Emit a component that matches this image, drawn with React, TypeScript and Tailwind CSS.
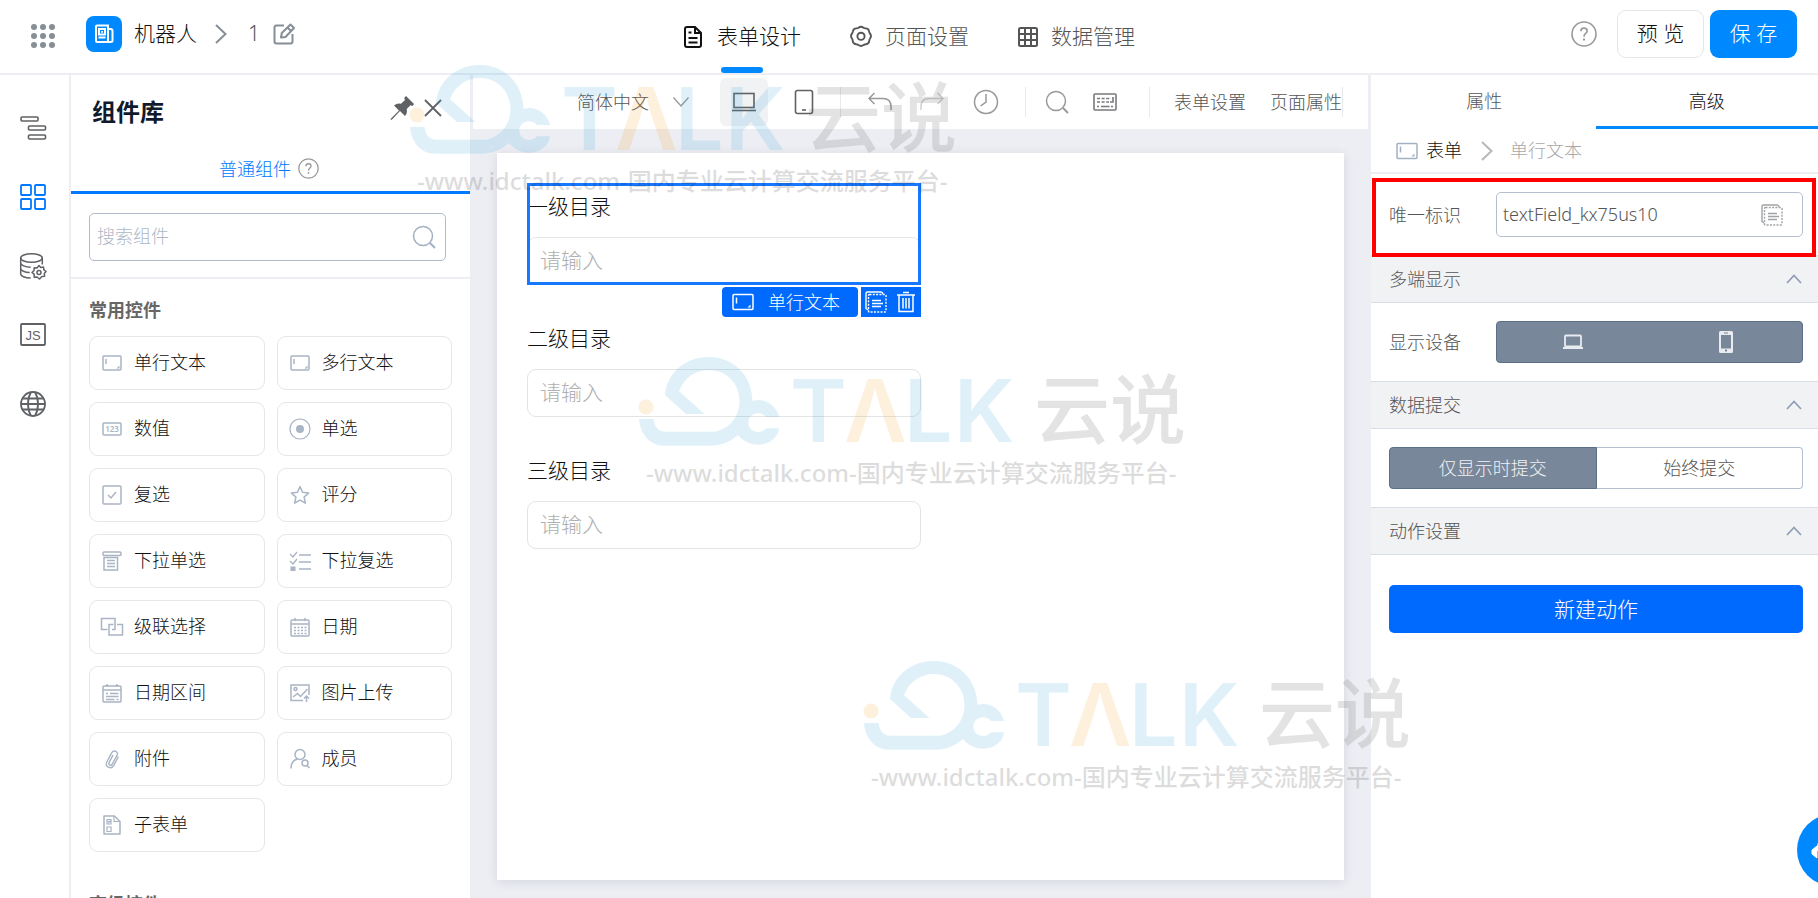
// App.tsx
// Form designer: top bar, icon rail, component library, canvas and property panel.

import type { ReactNode } from 'react'

/* ── Icons ─────────────────────────────────────────────────────────────── */

function Svg({
  w = 24,
  h = 24,
  sw = 1.5,
  className = '',
  children,
}: {
  w?: number
  h?: number
  sw?: number
  className?: string
  children: ReactNode
}) {
  return (
    <svg
      width={w}
      height={h}
      viewBox={`0 0 ${w} ${h}`}
      fill="none"
      stroke="currentColor"
      strokeWidth={sw}
      className={`shrink-0 ${className}`}
      aria-hidden="true"
    >
      {children}
    </svg>
  )
}

const TextFieldIcon = ({ className = '' }: { className?: string }) => (
  <Svg w={22} h={18} className={className}>
    <rect x="1" y="1.5" width="20" height="15" rx="1" />
    <path d="M4.5 4.5v6" />
    <path d="M18.5 11.5v3h-3z" fill="currentColor" stroke="none" />
  </Svg>
)

const CopyIcon = ({ className = '' }: { className?: string }) => (
  <Svg w={24} h={24} sw={1.4} className={className}>
    <path d="M4 20l-2-1.500V3.500Q2 2 3.500 2H17q1.500 0 2 2" />
    <rect x="4.500" y="4.500" width="17.500" height="17.500" rx="1" strokeDasharray="2 1.300" />
    <path d="M8 10.500h9M8 13.500h11M8 16.500h9" />
  </Svg>
)

const HelpIcon = ({ size }: { size: number }) => (
  <svg width={size} height={size} viewBox="0 0 26 26" fill="none" stroke="currentColor" strokeWidth="1.6" className="shrink-0" aria-hidden="true">
    <circle cx="13" cy="13" r="12" />
    <path d="M9.800 10.300c0-2 1.400-3.200 3.200-3.200s3.200 1.200 3.200 2.900c0 2.200-3.100 2.400-3.100 4.900v.8" />
    <path d="M13 17.500v2" strokeWidth="2" />
  </svg>
)

const SearchIcon = () => (
  <Svg w={24} h={24}>
    <circle cx="11" cy="11" r="9.500" />
    <path d="M18 18l5 5" strokeWidth="2" />
  </Svg>
)

const ChevronRight = () => (
  <Svg w={14} h={22} sw={2}>
    <path d="M2 2l9.500 9L2 20" />
  </Svg>
)

const fieldIcons: Record<string, ReactNode> = {
  text: (
    <Svg w={22} h={22}>
      <rect x="2" y="4" width="18" height="14" rx="1" />
      <path d="M5 7v5" />
      <path d="M18.500 13.500v3h-3z" fill="currentColor" stroke="none" />
    </Svg>
  ),
  number: (
    <Svg w={22} h={22}>
      <rect x="2" y="5" width="18" height="12" rx="1" />
      <text x="11" y="14" fontSize="8" fontWeight="600" textAnchor="middle" fill="currentColor" stroke="none">
        123
      </text>
    </Svg>
  ),
  radio: (
    <Svg w={22} h={22} sw={1.200}>
      <circle cx="11" cy="11" r="10" />
      <circle cx="11" cy="11" r="4" fill="currentColor" stroke="none" />
    </Svg>
  ),
  checkbox: (
    <Svg w={22} h={22}>
      <rect x="2" y="2" width="18" height="18" rx="1" />
      <path d="M7 11l3 3 5-6" />
    </Svg>
  ),
  star: (
    <Svg w={22} h={22}>
      <path d="M11 2.500l2.500 5.700 6.200.7-4.600 4.200 1.300 6.100L11 16.100l-5.400 3.100 1.300-6.100L2.300 8.900l6.200-.7z" strokeLinejoin="round" />
    </Svg>
  ),
  select: (
    <Svg w={22} h={22}>
      <rect x="2" y="2" width="18" height="3.500" rx="1" />
      <path d="M3 7.500v12.500h13.500V7.500z" />
      <path d="M6 10.500h8M6 13.500h8M6 16.500h8" />
    </Svg>
  ),
  multiselect: (
    <Svg w={22} h={22} sw={1.300}>
      <path d="M1 4l3 3 4-5M1 11l3 3 4-5M10 5h12M10 12h12M10 19h12" />
      <rect x="1.500" y="16.500" width="5" height="4.500" fill="currentColor" stroke="none" />
    </Svg>
  ),
  cascade: (
    <Svg w={24} h={22}>
      <path d="M7 13.500H1.500V2.500h13.500v4.500M17 8.500h5.500v10.500H9V14M7.500 13.500h-1M9 14.500V8.500h4.500M15 7v6.500h-3" />
    </Svg>
  ),
  date: (
    <Svg w={22} h={22}>
      <rect x="2" y="4" width="18" height="16" rx="1" />
      <path d="M2 8h18M6 2v3M16 2v3" />
      <path d="M5 11.500h13M5 14.500h13M5 17.500h13" strokeDasharray="2 1.500" />
    </Svg>
  ),
  daterange: (
    <Svg w={22} h={22}>
      <rect x="2" y="4" width="18" height="16" rx="1" />
      <path d="M2 8h18M6 2v3M16 2v3" />
      <path d="M5 11.500h2M9 11.500h8.500M5 14.500h12.500M5 17.500h8.500M15.500 17.500h2" />
    </Svg>
  ),
  image: (
    <Svg w={22} h={22}>
      <path d="M14 18.500H2V3h18v10" />
      <circle cx="6.500" cy="7" r="1.500" />
      <path d="M4 15l4.500-3.500 3 3 7-7.500M17.500 20v-6M15 16.500l2.500-2.500 2.500 2.500" />
    </Svg>
  ),
  attach: (
    <Svg w={22} h={22} sw={1.400}>
      <path d="M17.500 8.500l-4.700 8.800c-2.600 4.700-9.400 1.500-7-3.300l5-9.300c1.900-3.500 7-1.100 5.300 2.400l-4.900 9c-1.200 2.200-4.300.8-3.200-1.500l4-7.400" />
    </Svg>
  ),
  member: (
    <Svg w={22} h={22}>
      <circle cx="11" cy="6.500" r="5" />
      <path d="M2 20.500c0-5 2.500-8.500 6.500-9.500" />
      <circle cx="16" cy="15" r="3" />
      <path d="M18 17.500l2.500 2.500" />
    </Svg>
  ),
  subform: (
    <Svg w={22} h={22}>
      <path d="M3 2h10.500l5.500 5.500V20H3z" strokeLinejoin="round" />
      <path d="M13 2v5.500h6M6 5.500h4v4.500H6zM6 13h4v4.500H6zM7 7l1 1.500L10 6" strokeWidth="1.200" />
    </Svg>
  ),
}

/* ── Data ──────────────────────────────────────────────────────────────── */

const components = [
  { label: '单行文本', icon: 'text' },
  { label: '多行文本', icon: 'text' },
  { label: '数值', icon: 'number' },
  { label: '单选', icon: 'radio' },
  { label: '复选', icon: 'checkbox' },
  { label: '评分', icon: 'star' },
  { label: '下拉单选', icon: 'select' },
  { label: '下拉复选', icon: 'multiselect' },
  { label: '级联选择', icon: 'cascade' },
  { label: '日期', icon: 'date' },
  { label: '日期区间', icon: 'daterange' },
  { label: '图片上传', icon: 'image' },
  { label: '附件', icon: 'attach' },
  { label: '成员', icon: 'member' },
  { label: '子表单', icon: 'subform' },
]

/* ── Header ────────────────────────────────────────────────────────────── */

function Header() {
  return (
    <header className="grid h-[75px] shrink-0 grid-cols-[1fr_auto_1fr] border-b-2 border-[#edeef3] bg-white">
      <div className="flex items-center pb-[5px] pl-[30px]">
        <button type="button" aria-label="应用" className="mr-[29px] pt-1 text-[#868e96]">
          <Svg w={27} h={27}>
            {[4, 13, 22].map((y) =>
              [4, 13, 22].map((x) => (
                <circle key={`${x}-${y}`} cx={x} cy={y} r="3" fill="currentColor" stroke="none" />
              )),
            )}
          </Svg>
        </button>
        <span className="mr-3 flex size-9 items-center justify-center rounded-lg bg-[#0089ff] text-white">
          <Svg w={20} h={20} sw={2}>
            <path d="M2 2.500Q2 1.500 3 1.500h11v16.500H3q-1 0-1-1zM14 5h2.500q2 0 2 2v9.500q0 1.500-2 1.500H3" />
            <path d="M4.500 13.500h7" />
            <rect x="5" y="5" width="6" height="5.500" />
            <rect x="7.200" y="7" width="1.800" height="1.800" fill="currentColor" stroke="none" />
          </Svg>
        </span>
        <span className="mr-[17px] text-[21px] text-[#111]">机器人</span>
        <span className="mr-5 text-[#868e96]">
          <ChevronRight />
        </span>
        <span className="mr-3 text-[21px] text-[#555]">1</span>
        <button type="button" aria-label="编辑" className="text-[#868e96]">
          <Svg w={24} h={24} sw={2}>
            <path d="M12 3.500H4.500q-2 0-2 2v14q0 2 2 2h14q2 0 2-2V12" />
            <path d="M18.500 2.500l3.500 3.500-8.500 9-4.500.5.800-4.500zM15.500 5.500l3.500 3.500" strokeLinejoin="round" />
          </Svg>
        </button>
      </div>

      <nav className="flex gap-12 text-[21px] text-[#555]" aria-label="设计步骤">
        <a href="#form" className="relative flex items-center gap-[14px] text-[#111]">
          <Svg w={20} h={24} sw={2}>
            <path d="M3.500 2h8.500l6 6v12q0 2-2 2H4q-2 0-2-2V4q0-2 2-2z" />
            <path d="M12 2v6h6M5.500 7.500H8.500M5.500 13h9M5.500 17.500h9" />
          </Svg>
          表单设计
          <span className="absolute bottom-0 left-1/2 h-[6px] w-[42px] -translate-x-1/2 rounded-full bg-[#0089ff]" />
        </a>
        <a href="#page" className="flex items-center gap-3">
          <Svg w={24} h={24} sw={1.900}>
            <path d="M9.500 2.800Q12 .8 14.500 2.800q1 .7 2.200.6 3 .1 3.400 3 .2 1.200 1 2.200 1.700 2.400 0 4.900-.8 1-.8 2.200-.2 3.200-3.400 3.500-1.300 0-2.300.8-2.600 1.900-5.200 0-1-.8-2.300-.8-3.200-.3-3.400-3.500 0-1.200-.8-2.200-1.700-2.500 0-4.900.8-1 1-2.200.4-2.900 3.400-3 1.200.1 2.200-.6z" strokeLinejoin="round" />
            <circle cx="12" cy="11.300" r="3.600" />
          </Svg>
          页面设置
        </a>
        <a href="#data" className="flex items-center gap-3">
          <Svg w={22} h={22} sw={2}>
            <rect x="2" y="2" width="18" height="18" rx="1.500" />
            <path d="M2 8h18M2 14h18M8 2v18M14 2v18" />
          </Svg>
          数据管理
        </a>
      </nav>

      <div className="flex items-center justify-end gap-[6px] pb-[5px] pr-[21px] text-[21px]">
        <button type="button" aria-label="帮助" className="mr-[14px] text-[#999]">
          <HelpIcon size={26} />
        </button>
        <button type="button" className="h-12 w-[87px] rounded-[9px] border border-[#e5e6e8] text-[#111]">
          预 览
        </button>
        <button type="button" className="h-12 w-[87px] rounded-[9px] bg-[#0089ff] text-white">
          保 存
        </button>
      </div>
    </header>
  )
}

/* ── Icon rail ─────────────────────────────────────────────────────────── */

function Rail() {
  const items = [
    {
      label: '大纲树',
      icon: (
        <Svg w={28} h={28} sw={1.600}>
          <rect x="2" y="3" width="17" height="4" rx="1" />
          <rect x="9.500" y="12" width="17" height="4" rx="1" />
          <rect x="9.500" y="21" width="17" height="4" rx="1" />
        </Svg>
      ),
    },
    {
      label: '组件库',
      icon: (
        <Svg w={28} h={28} sw={1.800}>
          <rect x="2" y="2" width="10" height="10" rx="1" />
          <rect x="16" y="2" width="10" height="10" rx="1" />
          <rect x="2" y="16" width="10" height="10" rx="1" />
          <rect x="16" y="16" width="10" height="10" rx="1" />
        </Svg>
      ),
    },
    {
      label: '数据源',
      icon: (
        <Svg w={28} h={28} sw={1.500}>
          <ellipse cx="12.500" cy="6" rx="10.800" ry="4.200" />
          <path d="M1.700 6v16c0 2 4 4 10 4M23.300 6v6.500M1.700 11c0 2 4.500 4.300 10 4.300M1.700 16.500c0 2 4 4 9 4" />
          <path d="M20 13.500l1.800 2 2.700-.5.300 2.700 2.200 1.800-1.700 2 .3 2.700-2.700.2L20.500 27l-2.500-2-2.800.2v-2.900L13 20.500l2-2 .2-2.700 2.800.2z" strokeLinejoin="round" />
          <circle cx="20" cy="20.500" r="2" />
        </Svg>
      ),
    },
    {
      label: '动作面板',
      icon: (
        <Svg w={28} h={28} sw={1.800}>
          <rect x="2" y="3" width="24" height="21" rx="1" />
          <text x="14" y="18.500" fontSize="13" fontWeight="400" fontFamily="Liberation Sans, sans-serif" textAnchor="middle" fill="currentColor" stroke="none">
            JS
          </text>
        </Svg>
      ),
    },
    {
      label: '多语言',
      icon: (
        <Svg w={28} h={28} sw={1.800}>
          <circle cx="14" cy="14" r="12" />
          <path d="M2 14h24M3.500 8.500h21M3.500 19.500h21M12 2c-4 7-4 17 0 24M16 2c4 7 4 17 0 24" />
        </Svg>
      ),
    },
  ]

  return (
    <nav className="flex w-[71px] shrink-0 flex-col border-r-2 border-[#edeef3] bg-white pt-[18px]" aria-label="工具栏">
      {items.map(({ label, icon }, i) => (
        <button
          key={label}
          type="button"
          aria-label={label}
          className={`flex h-[69px] items-center pl-[19px] ${i === 1 ? 'text-[#0079ff]' : 'text-[#5f6164]'}`}
        >
          {icon}
        </button>
      ))}
    </nav>
  )
}

/* ── Component library ─────────────────────────────────────────────────── */

function Library() {
  return (
    <aside className="flex w-[399px] shrink-0 flex-col overflow-hidden bg-white">
      <div className="flex h-[69px] shrink-0 items-center justify-between pl-[21px] pr-[27px] pt-1">
        <h2 className="text-2xl font-bold text-[#111a2c]">组件库</h2>
        <div className="flex items-center gap-2 pb-2 text-[#5f6164]">
          <button type="button" aria-label="固定">
            <Svg w={26} h={26}>
              <path d="M17 1l8 8-1.500 2-2-.8-3.800 3.800q1 4-1.700 7l-5-5-8 8.500-1.500.5.5-1.500L10 15.500l-5-5q3-2.500 7-1.700l4-3.800-.8-2z" fill="currentColor" stroke="none" />
            </Svg>
          </button>
          <button type="button" aria-label="关闭">
            <Svg w={20} h={20} sw={1.800}>
              <path d="M2 2l16 16M18 2L2 18" />
            </Svg>
          </button>
        </div>
      </div>

      <div className="flex h-[50px] shrink-0 items-center justify-center gap-[7px] border-b-3 border-[#0079ff] pr-[3px] pt-[2px] text-lg text-[#0079ff]">
        普通组件
        <span className="text-[#999]">
          <HelpIcon size={21} />
        </span>
      </div>

      <div className="shrink-0 border-b-2 border-[#edeef3] pb-4 pl-[18px] pr-6 pt-[19px]">
        <label className="flex h-12 items-center rounded-[5px] border border-[#b0bccb] pl-[7px] pr-[9px] text-[#a3b0c2]">
          <input
            type="search"
            aria-label="搜索组件"
            placeholder="搜索组件"
            className="min-w-0 flex-1 pb-[2px] text-lg text-[#111] outline-none placeholder:text-[#adb8c6]"
          />
          <SearchIcon />
        </label>
      </div>

      <div className="px-[18px] pt-[18px]">
        <h3 className="mb-[12px] text-lg leading-[27px] font-bold text-[#666]">常用控件</h3>
        <div className="grid grid-cols-2 gap-3">
          {components.map(({ label, icon }) => (
            <button
              key={label}
              type="button"
              className="flex h-[54px] items-center gap-[11px] rounded-[9px] border border-[#e5e6e8] pb-[3px] pl-[11px] text-lg text-[#111]"
            >
              <span className="flex w-[22px] justify-center pt-[3px] text-[#a9b4c4]">{fieldIcons[icon]}</span>
              {label}
            </button>
          ))}
        </div>
        <h3 className="mt-[39px] text-lg leading-[27px] font-bold text-[#666]">高级控件</h3>
      </div>
    </aside>
  )
}

/* ── Canvas ────────────────────────────────────────────────────────────── */

const Divider = ({ className = '' }: { className?: string }) => (
  <span className={`h-[30px] w-px shrink-0 bg-[#e8e9ed] ${className}`} />
)

function ToolButton({ label, className = '', children }: { label: string; className?: string; children: ReactNode }) {
  return (
    <button type="button" aria-label={label} className={`flex size-12 shrink-0 items-center justify-center rounded-md ${className}`}>
      {children}
    </button>
  )
}

function Toolbar() {
  return (
    <div className="mx-[3px] flex h-[54px] shrink-0 items-center justify-end bg-white pr-[25px] text-lg text-[#555]">
      <div className="relative mr-[30px] flex items-center">
        <select aria-label="语言" className="w-[113px] appearance-none outline-none">
          <option>简体中文</option>
        </select>
        <span className="pointer-events-none absolute right-0 text-[#999]">
          <Svg w={18} h={12} sw={1.300}>
            <path d="M1.500 1.500L9 10l7.500-8.500" />
          </Svg>
        </span>
      </div>
      <ToolButton label="桌面端" className="mr-3 bg-[#f1f2f4] text-[#5f6164]">
        <Svg w={24} h={20} sw={1.600}>
          <rect x="2" y="1.500" width="20" height="14" />
          <path d="M0 18.500h24" />
        </Svg>
      </ToolButton>
      <ToolButton label="移动端" className="mr-3 text-[#5f6164]">
        <Svg w={20} h={26} sw={1.600}>
          <rect x="1.500" y="1.500" width="17" height="23" rx="2" />
          <path d="M8 21h4" />
        </Svg>
      </ToolButton>
      <Divider className="mr-[15px]" />
      <ToolButton label="撤销" className="mr-1 text-[#999]">
        <Svg w={26} h={20}>
          <path d="M7.500 1L2 6.500 7.500 12M2 6.500h14q8 0 8 8V18" />
        </Svg>
      </ToolButton>
      <ToolButton label="重做" className="mr-[6px] text-[#d0d1d3]">
        <Svg w={26} h={20}>
          <path d="M18.500 1L24 6.500 18.500 12M24 6.500H10q-8 0-8 8V18" />
        </Svg>
      </ToolButton>
      <ToolButton label="历史" className="mr-[15px] text-[#999]">
        <Svg w={26} h={26}>
          <circle cx="13" cy="13" r="11.500" />
          <path d="M13 5v8l-5.500 4" />
        </Svg>
      </ToolButton>
      <Divider className="mr-[7px]" />
      <ToolButton label="搜索" className="text-[#999]">
        <SearchIcon />
      </ToolButton>
      <ToolButton label="快捷键" className="mr-5 text-[#77797c]">
        <Svg w={24} h={18} sw={1.600}>
          <rect x="1" y="1" width="22" height="16" rx="1" />
          <path d="M4 5.500h14M4 9h12" strokeDasharray="3 1.600" />
          <path d="M20 4v5h-3M4 13.500h2M8 13.500h8.500M18 13.500h2" />
        </Svg>
      </ToolButton>
      <Divider className="mr-6" />
      <button type="button" className="mr-6 shrink-0">表单设置</button>
      <button type="button" className="shrink-0">页面属性</button>
      <Divider />
    </div>
  )
}

function Field({ id, label, selected = false }: { id: string; label: string; selected?: boolean }) {
  return (
    <div className="relative mb-[30px] w-[394px] max-w-full">
      <label htmlFor={id} className="mb-[6px] flex h-12 items-center text-[21px] text-[#111]">
        {label}
      </label>
      <input
        id={id}
        type="text"
        placeholder="请输入"
        className="block h-12 w-full rounded-[9px] border border-[#e3e4e6] px-3 pb-[2px] text-[21px] text-[#111] outline-none placeholder:text-[#b0b0b0]"
      />
      {selected && (
        <>
          <div className="pointer-events-none absolute inset-0 border-3 border-[#1677ff]" />
          <div className="absolute top-full right-0 mt-[2px] flex h-[30px] gap-[3px] text-lg text-white">
            <div className="flex items-center gap-[14px] rounded-[4px] bg-[#006aff] pr-[18px] pl-[10px]">
              <TextFieldIcon />
              单行文本
            </div>
            <div className="flex w-[60px] items-center justify-between bg-[#006aff] px-[3px]">
              <button type="button" aria-label="复制">
                <CopyIcon />
              </button>
              <button type="button" aria-label="删除">
                <Svg w={24} h={24}>
                  <path d="M3 5h18M9 2.500h6M5 5v16.500h14V5M9 8v10.500M12 8v10.500M15 8v10.500" />
                </Svg>
              </button>
            </div>
          </div>
        </>
      )}
    </div>
  )
}

function Canvas() {
  return (
    <main className="flex min-w-0 flex-1 flex-col bg-[#edeef3]">
      <Toolbar />
      <div className="mx-[27px] mt-6 mb-[18px] flex-1 bg-white p-[30px] shadow-[0_2px_10px_rgba(31,56,88,0.12)]">
        <Field id="level1" label="一级目录" selected />
        <Field id="level2" label="二级目录" />
        <Field id="level3" label="三级目录" />
      </div>
    </main>
  )
}

/* ── Property panel ────────────────────────────────────────────────────── */

function SectionHead({ title }: { title: string }) {
  return (
    <button
      type="button"
      aria-expanded="true"
      className="flex h-12 w-full items-center justify-between border-y border-[#d9dee6] bg-[#f1f2f4] pr-[15px] pl-[18px] text-lg text-[#555]"
    >
      {title}
      <Svg w={18} h={12} sw={1.700} className="text-[#8f9db5]">
        <path d="M2 10l7-7.500L16 10" />
      </Svg>
    </button>
  )
}

function Properties() {
  return (
    <aside className="w-[447px] shrink-0 bg-white text-lg text-[#555]">
      <div className="flex h-[54px] pl-[2px]">
        <button type="button" className="flex-1 pb-[2px]">属性</button>
        <button type="button" className="flex-1 border-b-3 border-[#0089ff] pt-px text-[#111]">高级</button>
      </div>

      <div className="flex h-[45px] items-center border-b-2 border-[#edeef3] pl-[25px]">
        <TextFieldIcon className="text-[#a3b0c2]" />
        <a href="#form" className="ml-2 pb-[2px] text-[#111]">表单</a>
        <span className="mr-[16px] ml-[18px] text-[#b8b8b8]">
          <ChevronRight />
        </span>
        <span className="pb-[2px] text-[#a8a8a8]">单行文本</span>
      </div>

      <div className="relative flex h-[81px] items-center justify-between pr-[15px] pl-[18px]">
        <label htmlFor="uid">唯一标识</label>
        <div className="flex h-[45px] w-[307px] items-center rounded-[5px] border border-[#b3bfcd] pr-[18px] pl-[6px]">
          <input
            id="uid"
            type="text"
            defaultValue="textField_kx75us10"
            className="min-w-0 flex-1 pb-[2px] font-['Noto_Sans',sans-serif] outline-none"
          />
          <button type="button" aria-label="复制标识" className="text-[#a0a2a5]">
            <CopyIcon />
          </button>
        </div>
        <div className="pointer-events-none absolute -bottom-[2px] left-px right-[2px] top-1 border-4 border-[#ff0000]" />
      </div>

      <SectionHead title="多端显示" />
      <div className="flex h-[78px] items-center justify-between pr-[15px] pl-[18px]">
        <span id="device-label">显示设备</span>
        <div role="group" aria-labelledby="device-label" className="flex h-[42px] w-[307px] rounded-[4px] border border-[#5c6f88] bg-[#79879a] text-[#e8ebef]">
          <button type="button" aria-label="电脑" aria-pressed="true" className="flex flex-1 items-center justify-center">
            <Svg w={22} h={16} sw={1.800}>
              <rect x="3" y="1.500" width="16" height="11" rx="1" />
              <path d="M1 14h20" strokeWidth="2" />
            </Svg>
          </button>
          <button type="button" aria-label="手机" aria-pressed="true" className="flex flex-1 items-center justify-center">
            <Svg w={16} h={22}>
              <path fillRule="evenodd" d="M2.500 0h11Q15 0 15 1.500v19q0 1.500-1.500 1.500h-11Q1 22 1 20.500v-19Q1 0 2.500 0zM3 4v13.500h10V4zM6 1.500v1h4v-1zM7 18.500v2h2v-2z" fill="currentColor" stroke="none" />
            </Svg>
          </button>
        </div>
      </div>

      <SectionHead title="数据提交" />
      <div className="flex h-[78px] items-center pr-[15px] pl-[18px]">
        <button type="button" aria-pressed="true" className="h-[42px] flex-1 rounded-l-[4px] border border-[#5c6f88] bg-[#79879a] text-[#f1f3f5]">
          仅显示时提交
        </button>
        <button type="button" aria-pressed="false" className="h-[42px] flex-1 rounded-r-[4px] border border-l-0 border-[#b3bfcd]">
          始终提交
        </button>
      </div>

      <SectionHead title="动作设置" />
      <div className="pt-[30px] pr-[15px] pl-[18px]">
        <button type="button" className="h-12 w-full rounded-[5px] bg-[#006aff] text-[21px] text-white">
          新建动作
        </button>
      </div>
    </aside>
  )
}

/* ── Watermark ─────────────────────────────────────────────────────────── */

function Watermark({ className }: { className: string }) {
  return (
    <svg
      width="560"
      height="136"
      viewBox="0 -1 560 136"
      className={`pointer-events-none absolute overflow-visible opacity-15 ${className}`}
      aria-hidden="true"
    >
      <circle cx="8" cy="50" r="7.500" fill="#f59f1e" />
      <path
        fill="#2ea3dd"
        d="M1 62C2 77 12 88.700 26 88.700H71C83 88.700 92 85 100 78C105 84 112 87.700 120 87.700C131 87.700 140 81 141 71.300H128C126 74 123 75 120 75C114.500 75 110.400 71 110.400 65.700C110.400 60 114.500 56.300 120 56.300C123 56.300 126 57.500 128 60H141C139 50 130 43 120 43L114.400 43.700C114 18 95 0 71 0C47 0 29 16 27 38L48 57H66.500L41 34.300C46 21 57 13 71 13C89 13 101.500 27 101.500 44.300C101.500 59 92 72 77 74.700H27C21 74.700 16 70 15.700 62Z"
      />
      <g fontFamily="Inter, sans-serif" fontWeight="600" fontSize="86" fill="#2ea3dd">
        <text x="152" y="85">T</text>
        <text x="206" y="85" fill="#f59f1e">Λ</text>
        <text x="266" y="85">L</text>
        <text x="316" y="85">K</text>
      </g>
      <text x="396" y="81" fontFamily="'Noto Sans CJK SC', sans-serif" fontWeight="500" fontSize="76" fill="#4b4b4b">
        云说
      </text>
      <text x="8" y="125" fontFamily="'Noto Sans', 'Noto Sans CJK SC', sans-serif" fontWeight="500" fontSize="24" fill="#1c1c1c">
        -www.idctalk.com-国内专业云计算交流服务平台-
      </text>
    </svg>
  )
}

export default function App() {
  return (
    <div className="relative flex h-screen flex-col overflow-hidden bg-white font-['Noto_Sans','Noto_Sans_CJK_SC',sans-serif] font-light">
      <Header />
      <div className="flex min-h-0 flex-1">
        <Rail />
        <Library />
        <Canvas />
        <Properties />
      </div>

      <Watermark className="top-16 left-[409px]" />
      <Watermark className="top-[356px] left-[638px]" />
      <Watermark className="top-[660px] left-[863px]" />

      {/* Support button, half hidden past the right edge */}
      <button
        type="button"
        aria-label="客服"
        className="absolute -right-[51px] bottom-3 flex size-[72px] items-center justify-center rounded-full bg-[#0089ff] text-white"
      >
        <Svg w={46} h={46} sw={3}>
          <path d="M8 24C8 13 14 8 23 8s15 5 15 16v5" />
          <path d="M2 23l5-4v12l-5-4zM44 23l-5-4v12l5-4z" fill="currentColor" strokeWidth="1" />
        </Svg>
      </button>
    </div>
  )
}
